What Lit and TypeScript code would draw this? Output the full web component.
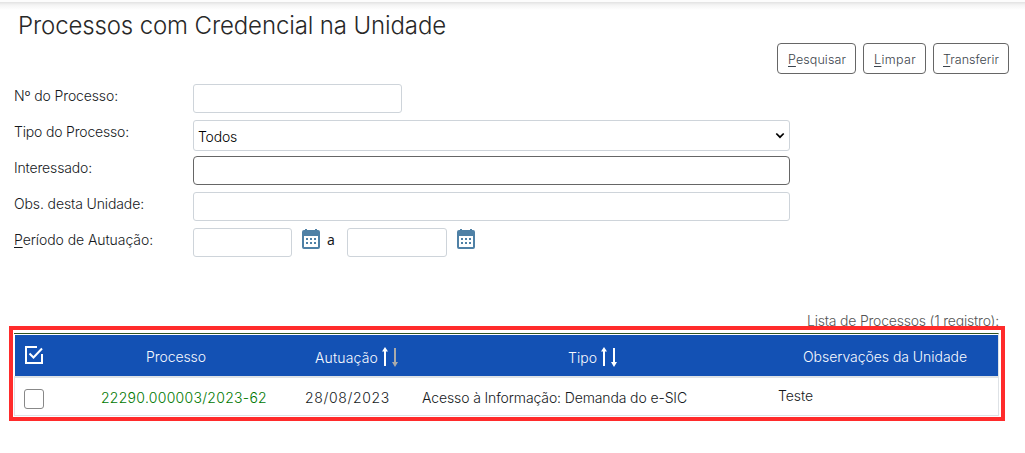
import { LitElement, html, css, svg } from "lit";
import { customElement, property } from "lit/decorators.js";

/** A single line of text tracked so that it spans the given width. */
@customElement("fit-text")
class FitText extends LitElement {
  @property({ type: Number }) span = 0;
  static styles = css`
    :host { display: inline-block; white-space: nowrap; text-align: left; }
    .run { display: inline-block; white-space: nowrap; }
  `;
  firstUpdated() {
    const run = this.renderRoot.querySelector(".run") as HTMLElement;
    const count = (this.textContent ?? "").length;
    this.style.width = `${this.span}px`;
    run.style.letterSpacing = `${(this.span - run.getBoundingClientRect().width) / count}px`;
  }
  render() {
    return html`<span class="run"><slot></slot></span>`;
  }
}

@customElement("calendar-icon")
class CalendarIcon extends LitElement {
  static styles = css`
    :host { display: block; width: 18px; height: 20px; }
    svg { display: block; }
  `;
  render() {
    return html`<svg width="18" height="20" viewBox="0 0 18 20">
      <path fill="#4f81a6" fill-rule="evenodd" d="M3 0h2v1h8V0h2v1h1a2 2 0 0 1 2 2v15a2 2 0 0 1-2 2H2a2 2 0 0 1-2-2V3a2 2 0 0 1 2-2h1zM2 7v11h14V7z"/>
      ${[9, 13].map((y) => [4, 8, 12].map((x) => svg`<rect x=${x} y=${y} width="2" height="2" fill="#4f81a6"/>`))}
    </svg>`;
  }
}

@customElement("sort-arrows")
class SortArrows extends LitElement {
  @property() down = "#fff";
  static styles = css`
    :host { display: block; width: 16px; height: 20px; }
    svg { display: block; }
  `;
  render() {
    return html`<svg width="16" height="20" viewBox="0 0 16 20">
      <path fill="#fff" d="M3 0L6 4.5H4V19H2V4.5H0z"/>
      <path fill=${this.down} d="M12 1h2v14h2l-3 5-3-5h2z"/>
    </svg>`;
  }
}

@customElement("app-root")
class AppRoot extends LitElement {
  static styles = css`
    :host {
      display: block; position: relative; width: 1025px; height: 453px; overflow: hidden;
      background: #fff; color: #16191c; font: 300 14px/20px Inter, Lato, sans-serif;
    }
    * { box-sizing: border-box; }
    u { text-decoration: underline; text-decoration-thickness: 1px; text-underline-offset: 2px; }
    .shade { height: 10px; background: linear-gradient(#fcfcfc 0 2px, #e2e2e2 2px, #f4f4f4 5px, #fff 10px); }
    .title { height: 33px; padding-left: 18px; font-size: 24px; line-height: 32px; color: #282828; font-weight: 300; margin: 0; }
    .actions { display: flex; justify-content: flex-end; gap: 7px; padding-right: 16px; height: 41px; }
    .btn {
      height: 31px; padding: 0 0 0 10px; border: 1px solid #666; border-radius: 4px; background: #fff;
      font: 300 12.5px/31px Inter, Lato, sans-serif; color: #3c444c; text-align: left;
    }
    .w79 { width: 79px; } .w63 { width: 63px; } .w76 { width: 76px; padding-left: 9px; }
    .row { display: grid; grid-template-columns: 179px auto; height: 36px; padding-left: 14px; align-items: start; }
    .label { padding-top: 2px; height: 22px; }
    .field { height: 29px; border: 1px solid #ced4da; border-radius: 3px; background: #fff; }
    .short { width: 209px; }
    .wide { width: 597px; }
    .active { border-color: #666; border-radius: 4px; }
    .select { height: 31px; display: flex; justify-content: space-between; align-items: center; padding: 3px 4px 0; color: #000; }
    .chev { display: block; margin: -3px 0 0 0; }
    .dates { display: flex; }
    .d1 { width: 99px; } .d2 { width: 100px; }
    .cal1 { margin: 1px 7px 0 10px; }
    .cal2 { margin: 1px 0 0 10px; }
    .to { width: 20px; padding-top: 2px; font-family: "Noto Sans", sans-serif; font-weight: 400; }
    .list { padding: 46px 26px 0 14px; }
    .caption { height: 23px; color: #555; text-align: right; line-height: 20px; padding-top: 1px; }
    .table { border-top: 1px solid #2f5320; border-right: 1px solid #dee2e6; padding-top: 1px; }
    .cols { display: grid; grid-template-columns: 72px 208px 115px 361px auto; }
    .head { height: 41px; margin-left: 1px; background: #1351b4; color: #f8faff; }
    .body { height: 40px; border: solid #dee2e6; border-width: 2px 0 1px 1px; }
    .cell { display: flex; }
    .frame { position: absolute; left: 9px; top: 326px; width: 996px; height: 95px; border: 4px solid #ff2b2b; }
    .all { padding: 11px 0 0 10px; }
    .h1 { padding: 12px 0 0 59px; }
    .h2 { padding: 13px 0 0 20px; }
    .h3 { padding: 13px 0 0 158px; }
    .h4 { padding: 12px 0 0 32px; }
    .sort { margin: -1px 0 0 4px; }
    .box { width: 20px; height: 20px; margin: 11px 0 0 9px; border: 1px solid #888; border-radius: 3px; }
    .c1 { padding: 10px 0 0 14px; color: #007800; }
    .c2 { padding: 10px 0 0 10px; }
    .c3 { padding: 10px 0 0 12px; }
    .c4 { padding: 8px 0 0 7px; }
  `;
  render() {
    return html`
      <div class="shade"></div>
      <h1 class="title"><fit-text span="428">Processos com Credencial na Unidade</fit-text></h1>
      <div class="actions">
        <button class="btn w79"><fit-text span="58"><u>P</u>esquisar</fit-text></button>
        <button class="btn w63"><fit-text span="42"><u>L</u>impar</fit-text></button>
        <button class="btn w76"><fit-text span="56"><u>T</u>ransferir</fit-text></button>
      </div>
      <div class="row"><div class="label"><fit-text span="104">Nº do Processo:</fit-text></div><div class="field short"></div></div>
      <div class="row"><div class="label"><fit-text span="115">Tipo do Processo:</fit-text></div>
        <div class="field wide select"><fit-text span="39">Todos</fit-text>
          <svg class="chev" width="10" height="7" viewBox="0 0 10 7"><path d="M1.3 1.5L5 5.2 8.7 1.5" fill="none" stroke="#000" stroke-width="1.7"/></svg>
        </div></div>
      <div class="row"><div class="label"><fit-text span="78">Interessado:</fit-text></div><div class="field wide active"></div></div>
      <div class="row"><div class="label"><fit-text span="130">Obs. desta Unidade:</fit-text></div><div class="field wide"></div></div>
      <div class="row"><div class="label"><fit-text span="139"><u>P</u>eríodo de Autuação:</fit-text></div>
        <div class="dates">
          <div class="field d1"></div><calendar-icon class="cal1"></calendar-icon><div class="to">a</div>
          <div class="field d2"></div><calendar-icon class="cal2"></calendar-icon>
        </div></div>
      <div class="list">
        <div class="caption"><fit-text span="192">Lista de Processos (1 registro):</fit-text></div>
        <div class="table">
          <div class="cols head">
            <div class="cell all">
              <svg width="18" height="18" viewBox="0 0 18 18" fill="none" stroke="#fff" stroke-width="2"><path d="M12 1H1v16h16V8"/><path d="M4.5 7.5l4 4L17 2.5"/></svg>
            </div>
            <div class="cell h1"><fit-text span="60">Processo</fit-text></div>
            <div class="cell h2"><fit-text span="63">Autuação</fit-text><sort-arrows class="sort" down="#aaa"></sort-arrows></div>
            <div class="cell h3"><fit-text span="29">Tipo</fit-text><sort-arrows class="sort"></sort-arrows></div>
            <div class="cell h4"><fit-text span="164">Observações da Unidade</fit-text></div>
          </div>
          <div class="cols body">
            <div class="cell"><div class="box"></div></div>
            <div class="cell c1"><fit-text span="166">22290.000003/2023-62</fit-text></div>
            <div class="cell c2"><fit-text span="85">28/08/2023</fit-text></div>
            <div class="cell c3"><fit-text span="265">Acesso à Informação: Demanda do e-SIC</fit-text></div>
            <div class="cell c4"><fit-text span="35">Teste</fit-text></div>
          </div>
        </div>
      </div>
      <div class="frame"></div>
    `;
  }
}
